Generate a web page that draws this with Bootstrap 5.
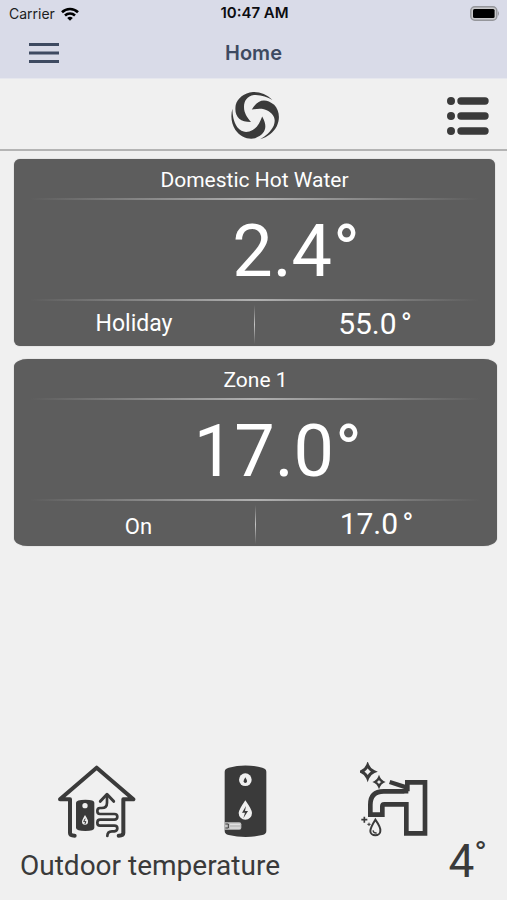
<!DOCTYPE html>
<html lang="en">
<head>
<meta charset="utf-8">
<meta name="viewport" content="width=device-width, initial-scale=1">
<title>Home</title>
<link href="https://cdn.jsdelivr.net/npm/bootstrap@5.3.0/dist/css/bootstrap.min.css" rel="stylesheet">
<style>
  body { background: #f0f0f0; color: #3a3a3a; font-family: Roboto, sans-serif; }
  .app-head { background: #d9dbe8; color: #3e4a61; font-family: Inter, sans-serif; border-bottom: 1px solid #e6e7ee; }
  .status-row { height: 27px; padding: 0 7px 0 9px; font-size: 14px; color: #1c1d22; }
  .status-row svg, .icon-btn svg { display: block; }
  .status-time { font-size: 15px; font-weight: 600; color: #0c0c10; }
  .title-row { height: 51px; padding: 0 29px; }
  .title-row h1 { font-size: 20px; font-weight: 600; line-height: 24px; }
  .icon-btn { border: 0; background: none; padding: 0; color: #3a3a3a; }
  .title-row .icon-btn { display: block; color: #3e4a61; }
  .tool-row { height: 72px; padding: 4px 18px 0 20px; border-bottom: 2px solid #b4b4b4; }
  .zones { padding: 8px 12px 0 14px; gap: 13px; }
  .zone { background: #5d5d5d; color: #fff; border-radius: 6px; box-shadow: 0 0 1px #8a8a8a; }
  .zone-round { border-radius: 14px / 8px; margin-right: -2px; }
  .zone h2 { font-size: 21px; font-weight: 400; line-height: 35px; padding-top: 4px; }
  .rule { height: 2px; margin: 0 16px; background: linear-gradient(90deg, transparent, #b0b0b0 50%, transparent); }
  .zone-temp { font-size: 72px; line-height: 94px; padding: 5px 135px 0 0; }
  .zone-temp span { margin-left: 1px; }
  .zone-foot { height: 45px; }
  .zone-mode { font-size: 23px; line-height: 46px; }
  .zone-round .zone-mode { padding-top: 3px; text-indent: 8px; font-size: 22px; }
  .zone-set { font-size: 30px; line-height: 45px; }
  .zone-set span { margin-left: 4px; }
  .v-rule { width: 1px; margin: 4px 0 2px; background: linear-gradient(transparent, #c4c4c4 50%, transparent); }
  .functions { padding: 0 38px 0 23px; }
  .outdoor { padding: 0 20px; height: 62px; font-size: 28px; line-height: 56px; }
  .outdoor-temp { font-size: 46px; line-height: 46px; }
  .outdoor-temp sup { font-size: 34px; top: -12px; line-height: 0; vertical-align: baseline; }
</style>
<script src="https://cdn.jsdelivr.net/npm/bootstrap@5.3.0/dist/js/bootstrap.bundle.min.js"></script>
</head>
<body class="d-flex flex-column min-vh-100">
<header class="app-head">
  <div class="status-row row g-0 align-items-center">
    <div class="col d-flex align-items-center gap-1">Carrier
      <svg width="20" height="14" viewBox="-2 0 20 14" fill="none" stroke="#000" stroke-width="2.6"><path d="M1 5.200a11.500 11.500 0 0 1 16 0M4 8.500a7.300 7.300 0 0 1 10 0"/><path d="M6.200 11a4 4 0 0 1 5.600 0L9 13.800z" fill="#000" stroke="none"/></svg>
    </div>
    <div class="col-auto status-time">10:47 AM</div>
    <div class="col d-flex justify-content-end">
      <svg width="30" height="15" viewBox="0 0 30 15"><rect x=".8" y=".8" width="26" height="13.400" rx="4" fill="#c9c9cb" stroke="#95969b" stroke-width="1.500"/><rect x="3" y="3" width="21.600" height="9" rx="1.500"/><path d="M28 5q2 2.500 0 5z" fill="#95969b"/></svg>
    </div>
  </div>
  <div class="title-row row g-0 align-items-center">
    <div class="col"><button class="icon-btn" type="button" aria-label="Menu"><svg width="30" height="20" viewBox="0 0 30 20" fill="currentColor"><path d="M0 0h30v3H0zM0 8.500h30v3H0zM0 17h30v3H0z"/></svg></button></div>
    <h1 class="col-auto m-0">Home</h1>
    <div class="col"></div>
  </div>
</header>
<nav class="tool-row row g-0 align-items-center" aria-label="Tools">
  <div class="col"></div>
  <div class="col-auto">
    <svg class="d-block" width="50" height="50" viewBox="-25 -25 50 50" fill="#3a3a3a" role="img" aria-label="Logo"><defs><path id="blade" d="M17.500-16C12-21.500 5-24.300-2-24C-11-23.300-17.500-17.500-19.300-11C-21 0-16 6-4 6C-8 1-11-3-11-9C-11-15-8-20-1-21C6-21.500 12-19 17.500-16Z"/></defs><use href="#blade"/><use href="#blade" transform="rotate(120)"/><use href="#blade" transform="rotate(240)"/></svg>
  </div>
  <div class="col d-flex justify-content-end">
    <button class="icon-btn" type="button" aria-label="List"><svg width="42" height="39" viewBox="0 0 42 39" fill="currentColor"><circle cx="4" cy="4" r="4"/><circle cx="4" cy="19" r="4"/><circle cx="4" cy="34" r="4"/><path d="M14 4h24M14 19h24M14 34h24" stroke="currentColor" stroke-width="7.400" stroke-linecap="round"/></svg></button>
  </div>
</nav>
<main class="zones d-flex flex-column">
  <section class="zone text-center">
    <h2 class="m-0">Domestic Hot Water</h2>
    <div class="rule"></div>
    <div class="zone-temp text-end">2.4<span>°</span></div>
    <div class="rule"></div>
    <div class="zone-foot d-flex">
      <div class="zone-mode col">Holiday</div>
      <div class="v-rule"></div>
      <div class="zone-set col">55.0<span>°</span></div>
    </div>
  </section>
  <section class="zone zone-round text-center">
    <h2 class="m-0">Zone 1</h2>
    <div class="rule"></div>
    <div class="zone-temp text-end">17.0<span>°</span></div>
    <div class="rule"></div>
    <div class="zone-foot d-flex">
      <div class="zone-mode col">On</div>
      <div class="v-rule"></div>
      <div class="zone-set col">17.0<span>°</span></div>
    </div>
  </section>
</main>
<footer class="mt-auto">
  <div class="functions row g-0">
    <div class="col d-flex justify-content-center align-items-end">
      <button class="icon-btn" type="button" aria-label="House heating">
        <svg width="78" height="73" viewBox="24 28 234 219" fill="none" stroke="currentColor" stroke-linecap="round" stroke-linejoin="round"><path d="M60 131H30L140 36 250 131H220V232q0 8-14 8M60 131V232q0 8 14 8" stroke-width="12"/><path d="M78 141q0-9 28-9t27 9v76q0 9-27 9t-28-9z" fill="currentColor" stroke="none"/><circle cx="105" cy="150" r="8" fill="#f0f0f0" stroke="none"/><path d="M105 178q10 15 9 20a9 9 0 0 1-18 0q0-5 9-20z" fill="#f0f0f0" stroke="none"/><path d="M105 190l-4 8h7l-3 6" stroke-width="3"/><path d="M171 118V141q0 16-16 16H150q-8 0-8 9t8 9H193q9 0 9 8t-9 9H150q-8 0-8 9t8 9H193q9 0 9 8t-9 9H186q-14 0-14 14" stroke-width="8"/><path d="M151 137L171 116 191 137" stroke-width="9"/></svg>
      </button>
    </div>
    <div class="col d-flex justify-content-center align-items-end">
      <button class="icon-btn" type="button" aria-label="Water tank">
        <svg width="44" height="73" viewBox="46 28 132 219"><path d="M48 48q0-9 12-12 50-13 101 0 12 3 12 12v178q0 9-12 12-50 12-101 0-12-3-12-12z" fill="#3a3a3a"/><circle cx="110" cy="72" r="19" fill="#f0f0f0"/><path d="M110 65q5 8 5 12a5 5 0 0 1-10 0q0-4 5-12z" fill="#3a3a3a"/><path d="M110 134q21 30 20 38a20 20 0 0 1-40 0q0-9 20-38z" fill="#f0f0f0"/><path d="M112 151l-12 20h9l-5 17 14-22h-9z" fill="#3a3a3a"/><path d="M48 200H92q6 0 6 6v10q0 6-6 6H48z" fill="#c2c2c2"/><path d="M50 205h9v12h-9" fill="none" stroke="#3a3a3a" stroke-width="3"/><path d="M64 206H94M64 217H94" stroke="#e6e6e6" stroke-width="3"/></svg>
      </button>
    </div>
    <div class="col d-flex justify-content-center align-items-end">
      <button class="icon-btn" type="button" aria-label="Tap water">
        <svg width="70" height="76" viewBox="27 17 210 228" fill="none" stroke="currentColor"><path d="M172 105H98q-40 0-40 40V175H94V150q0-6 6-6H166V231H222V78H169V105" stroke-width="14"/><path d="M160 112H178V137H160z" fill="#f0f0f0" stroke="none"/><path d="M116 77L166 93" stroke-width="13"/><path d="M50 27q5 13 19 19-14 6-19 19-5-13-19-19 14-6 19-19z" stroke-width="9"/><path d="M84 64q4 9 12 13-8 4-12 13-4-9-12-13 8-4 12-13z" stroke-width="7"/><path d="M73 190q17 24 15 34a15 13 0 0 1-30 0q0-10 15-34z" stroke-width="6"/><path d="M66 222q2 9 11 8" stroke-width="4"/><path d="M40 181v18M31 190h18" stroke-width="5"/><path d="M54 199v10M49 204h10" stroke-width="3"/></svg>
      </button>
    </div>
  </div>
  <div class="outdoor d-flex justify-content-between">
    <span>Outdoor temperature</span>
    <span class="outdoor-temp">4<sup>°</sup></span>
  </div>
</footer>
</body>
</html>
